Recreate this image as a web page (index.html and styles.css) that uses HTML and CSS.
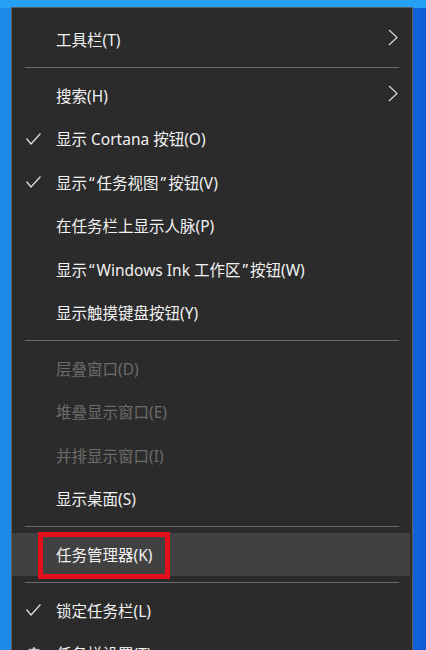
FILE: index.html
```html
<!DOCTYPE html>
<html lang="zh-CN">
<head>
<meta charset="utf-8">
<title>任务栏菜单</title>
<link rel="stylesheet" href="styles.css">
</head>
<body>
<div class="desk">
  <div class="menu">
    <div class="item">
      <span class="check"></span><span class="label">工具栏(T)</span>
      <svg class="chev" width="10" height="17" viewBox="0 0 10 17"><path d="M1 1 L9 8.5 L1 16" fill="none" stroke="#d8d8d8" stroke-width="1.2"/></svg>
    </div>
    <div class="sep"></div>
    <div class="item">
      <span class="check"></span><span class="label">搜索(H)</span>
      <svg class="chev" width="10" height="17" viewBox="0 0 10 17"><path d="M1 1 L9 8.5 L1 16" fill="none" stroke="#d8d8d8" stroke-width="1.2"/></svg>
    </div>
    <div class="item">
      <span class="check"><svg width="15" height="12" viewBox="0 0 15 12"><path d="M0.5 5.5 L5 11 L14.5 0.5" fill="none" stroke="#e0e0e0" stroke-width="1.2"/></svg></span><span class="label">显示 Cortana 按钮(O)</span>
    </div>
    <div class="item">
      <span class="check"><svg width="15" height="12" viewBox="0 0 15 12"><path d="M0.5 5.5 L5 11 L14.5 0.5" fill="none" stroke="#e0e0e0" stroke-width="1.2"/></svg></span><span class="label">显示<span class="q">“</span>任务视图<span class="q">”</span>按钮(V)</span>
    </div>
    <div class="item">
      <span class="check"></span><span class="label">在任务栏上显示人脉(P)</span>
    </div>
    <div class="item">
      <span class="check"></span><span class="label">显示<span class="q">“</span>Windows Ink 工作区<span class="q">”</span>按钮(W)</span>
    </div>
    <div class="item">
      <span class="check"></span><span class="label">显示触摸键盘按钮(Y)</span>
    </div>
    <div class="sep"></div>
    <div class="item disabled">
      <span class="check"></span><span class="label">层叠窗口(D)</span>
    </div>
    <div class="item disabled">
      <span class="check"></span><span class="label">堆叠显示窗口(E)</span>
    </div>
    <div class="item disabled">
      <span class="check"></span><span class="label">并排显示窗口(I)</span>
    </div>
    <div class="item">
      <span class="check"></span><span class="label">显示桌面(S)</span>
    </div>
    <div class="sep"></div>
    <div class="item hover">
      <span class="check"></span><span class="label">任务管理器(K)</span>
    </div>
    <div class="sep"></div>
    <div class="item">
      <span class="check"><svg width="15" height="12" viewBox="0 0 15 12"><path d="M0.5 5.5 L5 11 L14.5 0.5" fill="none" stroke="#e0e0e0" stroke-width="1.2"/></svg></span><span class="label">锁定任务栏(L)</span>
    </div>
    <div class="item">
      <span class="check"><svg width="16" height="16" viewBox="0 0 16 16"><g fill="none" stroke="#e0e0e0" stroke-width="1.3"><circle cx="8" cy="8" r="2.5"/><path d="M8 1 V3.5 M8 12.5 V15 M1 8 H3.5 M12.5 8 H15 M3 3 L4.8 4.8 M11.2 11.2 L13 13 M3 13 L4.8 11.2 M11.2 4.8 L13 3"/><circle cx="8" cy="8" r="5"/></g></svg></span><span class="label">任务栏设置(T)</span>
    </div>
  </div>
  <div class="mark"></div>
</div>
</body>
</html>
```

FILE: styles.css
```css
html, body {
  margin: 0;
  padding: 0;
}
body {
  width: 426px;
  height: 650px;
  overflow: hidden;
  background: linear-gradient(to right, #1c8ae6 0%, #1d8de8 85%, #0c5ad6 100%);
  font-family: "Noto Sans", "Noto Sans CJK SC", sans-serif;
}
.desk {
  position: relative;
  padding: 7px 13px 0 11px;
  background: linear-gradient(to bottom, #26a0f4 0px, #26a0f4 8px, transparent 8px);
}
.menu {
  width: 400px;
  background: #2b2b2b;
  border: 1px solid #5e5e5e;
  padding-top: 10px;
  padding-bottom: 20px;
}
.item {
  height: 43.4px;
  display: flex;
  align-items: center;
  color: #f2f2f2;
  font-size: 15.5px;
  letter-spacing: 0;
}
.item.disabled {
  color: #6c6c6c;
}
.item.hover {
  background: #414141;
  margin-right: 2px;
}
.check {
  width: 44px;
  flex: none;
  display: flex;
  justify-content: flex-start;
  align-items: center;
  padding-left: 14px;
  box-sizing: border-box;
}
.check svg {
  display: block;
}
.label {
  flex: 1;
  white-space: nowrap;
}
.q {
  font-family: "Noto Sans", sans-serif;
  padding: 0 2px;
}
.chev {
  flex: none;
  margin-right: 14px;
  margin-top: -5px;
}
.sep {
  height: 12.5px;
  display: flex;
  align-items: center;
  padding: 0 13px;
}
.sep::before {
  content: "";
  display: block;
  width: 100%;
  height: 1px;
  background: #6a6a6a;
}
.mark {
  position: absolute;
  left: 38px;
  top: 532px;
  width: 132px;
  height: 47px;
  box-sizing: border-box;
  border: 5px solid #e3101b;
}
```
